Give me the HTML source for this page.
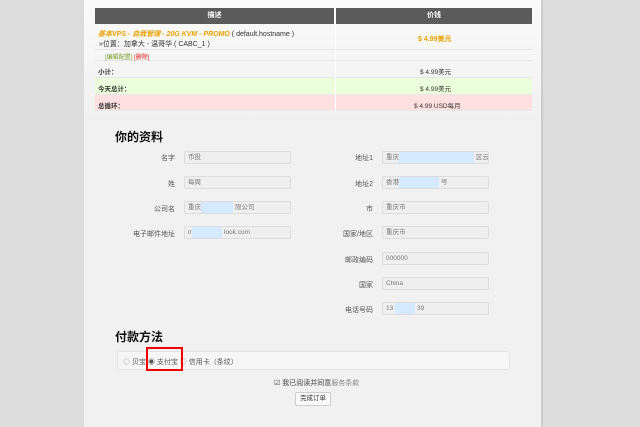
<!DOCTYPE html>
<html><head><meta charset="utf-8"><style>
*{margin:0;padding:0;box-sizing:border-box}
body{width:640px;height:427px;background:#dcdcdc;font-family:"Liberation Sans","Noto Sans CJK SC",sans-serif;position:relative;overflow:hidden;font-size:7px;color:#333}
#panel{position:absolute;left:84px;top:0;width:459px;height:427px;background:linear-gradient(#fafafa,#f1f1f1 120px);border-right:2px solid #ccc}
.a{position:absolute;white-space:nowrap}
.th{background:#5b5b5b;color:#fff;text-align:center;font-size:7px;line-height:16px;font-weight:bold}
.row{position:absolute;left:95px;width:437px;border-bottom:1px solid #e6e6e6}
.row span{position:absolute;top:0;white-space:nowrap}
.lbl{position:absolute;text-align:right;font-size:7px;color:#555;width:80px}
.inp{position:absolute;height:13px;width:107px;background:#efefef;border:1px solid #ddd;font-size:6.5px;color:#777;padding-left:3px;line-height:11px;border-radius:2px;white-space:nowrap;overflow:hidden}
.bl{background:#d6eaff;position:absolute;top:0;height:11px}
.inp span{position:absolute;top:0}
h2{position:absolute;font-size:12px;font-weight:bold;color:#111}
</style></head><body>
<div id="panel"></div>
<div class="a th" style="left:95px;top:8px;width:239px;height:16px">描述</div>
<div class="a th" style="left:336px;top:8px;width:196px;height:16px">价钱</div>
<div class="row" style="top:25px;height:25px">
 <span style="left:3px;top:4px;color:#e8a000;font-weight:bold;font-style:italic;font-size:7px">基本VPS - 自我管理 - 20G KVM - PROMO <span style="position:static;color:#333;font-weight:normal;font-style:normal">( default.hostname )</span></span>
 <span style="left:4px;top:14px">»位置：加拿大 - 温哥华 ( CABC_1 )</span>
 <span style="left:323px;top:9px;color:#e8a000;font-weight:bold">$ 4.99美元</span>
</div>
<div class="row" style="top:50px;height:11px"><span style="left:10px;top:2px;font-size:6px;color:#7a9a2a">[编辑配置] <span style="position:static;color:#d22">[删除]</span></span></div>
<div class="row" style="top:61px;height:17px"><span style="left:3px;top:5px;font-weight:bold;font-size:6.5px">小计：</span><span style="left:325px;top:5px;font-size:6.5px">$ 4.99美元</span></div>
<div class="row" style="top:78px;height:17px;background:#ebffdc"><span style="left:3px;top:5px;font-weight:bold;font-size:6.5px">今天总计：</span><span style="left:325px;top:5px;font-size:6.5px">$ 4.99美元</span></div>
<div class="row" style="top:95px;height:16px;background:#ffe0e0"><span style="left:3px;top:5px;font-weight:bold;font-size:6.5px">总循环：</span><span style="left:319px;top:5px;font-size:6.5px">$ 4.99 USD每月</span></div>
<div class="a" style="left:335px;top:25px;width:1px;height:86px;background:#fff"></div>

<h2 style="left:115px;top:128px">你的资料</h2>
<div class="lbl" style="left:95px;top:153px">名字</div><div class="inp" style="left:184px;top:151px">币投</div>
<div class="lbl" style="left:95px;top:179px">姓</div><div class="inp" style="left:184px;top:176px">每周</div>
<div class="lbl" style="left:95px;top:204px">公司名</div><div class="inp" style="left:184px;top:201px">重庆<div class="bl" style="left:16px;width:32px"></div><span style="left:50px">限公司</span></div>
<div class="lbl" style="left:95px;top:229px">电子邮件地址</div><div class="inp" style="left:184px;top:226px">m<div class="bl" style="left:7px;width:30px"></div><span style="left:39px">look.com</span></div>

<div class="lbl" style="left:293px;top:153px">地址1</div><div class="inp" style="left:382px;top:151px">重庆<div class="bl" style="left:16px;width:75px"></div><span style="left:93px">区云</span></div>
<div class="lbl" style="left:293px;top:179px">地址2</div><div class="inp" style="left:382px;top:176px">香港<div class="bl" style="left:16px;width:40px"></div><span style="left:58px">号</span></div>
<div class="lbl" style="left:293px;top:204px">市</div><div class="inp" style="left:382px;top:201px">重庆市</div>
<div class="lbl" style="left:293px;top:229px">国家/地区</div><div class="inp" style="left:382px;top:226px">重庆市</div>
<div class="lbl" style="left:293px;top:255px">邮政编码</div><div class="inp" style="left:382px;top:252px">000000</div>
<div class="lbl" style="left:293px;top:280px">国家</div><div class="inp" style="left:382px;top:277px">China</div>
<div class="lbl" style="left:293px;top:305px">电话号码</div><div class="inp" style="left:382px;top:302px">13<div class="bl" style="left:12px;width:20px"></div><span style="left:34px">39</span></div>

<h2 style="left:115px;top:328px">付款方法</h2>
<div class="a" style="left:117px;top:351px;width:393px;height:19px;background:#f6f6f6;border:1px solid #e4e4e4;border-radius:3px"></div>
<div class="a" style="left:123px;top:357px;font-size:7px;color:#555"><span style="color:#aaa">◎</span> 贝宝 ◉ 支付宝 <span style="color:#aaa">◎</span> 信用卡（条纹）</div>
<div class="a" style="left:146px;top:347px;width:37px;height:24px;border:2px solid #e00"></div>
<div class="a" style="left:274px;top:378px;font-size:7px;color:#444">☑ 我已阅读并同意<span style="color:#888">服务条款</span></div>
<div class="a" style="left:295px;top:392px;width:36px;height:14px;background:#fafafa;border:1px solid #ccc;border-radius:2px;font-size:6.5px;text-align:center;line-height:12px">完成订单</div>
</body></html>
